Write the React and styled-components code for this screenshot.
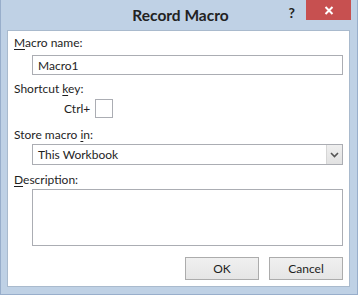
import React from "react";
import styled, { createGlobalStyle } from "styled-components";

const Global = createGlobalStyle`
  html, body { margin: 0; padding: 0; background: #bfd1e5; }
  body { font-family: Lato, "Noto Sans", sans-serif; font-size: 12px; color: #1e1e1e; }
  * { box-sizing: border-box; }
`;

const Window = styled.div`
  width: 358px;
  height: 295px;
  background: #bfd1e5;
  border: 1px solid #98aecb;
  border-top: none;
  display: flex;
  flex-direction: column;
  padding: 0 7px 7px 6px;
`;

const TitleBar = styled.div`
  height: 30px;
  position: relative;
  display: flex;
  align-items: flex-start;
  justify-content: center;
`;

const Title = styled.div`
  font-weight: 700;
  font-size: 15.5px;
  line-height: 20px;
  padding-top: 5px;
  color: #222;
  margin-left: 4px;
`;

const Help = styled.div`
  position: absolute;
  right: 55px;
  top: 4px;
  font-weight: 700;
  font-size: 14px;
  color: #222;
`;

const Close = styled.div`
  position: absolute;
  right: -1px;
  top: 0;
  width: 45px;
  height: 20px;
  background: #c75050;
  display: flex;
  align-items: center;
  justify-content: center;
`;

const Panel = styled.div`
  flex: 1;
  background: #fff;
  border: 1px solid #a9bacd;
  padding: 4px 6px 0 6px;
  display: flex;
  flex-direction: column;
`;

const Label = styled.div`
  line-height: 15px;
  margin-top: ${(p) => p.$mt || 0}px;
  u { text-decoration: underline; text-underline-offset: 2px; }
`;

const Field = styled.div`
  margin-left: 18px;
  margin-top: ${(p) => p.$mt || 0}px;
  height: ${(p) => p.$h}px;
  border: 1px solid #abadb3;
  background: #fff;
  display: flex;
  align-items: center;
  padding-left: 5px;
`;

const KeyRow = styled.div`
  display: flex;
  align-items: center;
  margin-top: 3px;
  margin-left: 50px;
  gap: 5px;
`;

const KeyBox = styled.div`
  width: 18px;
  height: 19px;
  border: 1px solid #abadb3;
`;

const Select = styled(Field)`
  padding-right: 0;
  justify-content: space-between;
  align-items: stretch;
`;

const SelectText = styled.span`
  display: flex;
  align-items: center;
`;

const Arrow = styled.div`
  width: 16px;
  background: linear-gradient(#efefef, #e2e2e2);
  border-left: 1px solid #d6d6d6;
  display: flex;
  align-items: center;
  justify-content: center;
`;

const Buttons = styled.div`
  display: flex;
  justify-content: flex-end;
  gap: 10px;
  margin-top: 11px;
`;

const Button = styled.div`
  width: 74px;
  height: 23px;
  border: 1px solid #acacac;
  background: linear-gradient(#f0f0f0, #e5e5e5);
  display: flex;
  align-items: center;
  justify-content: center;
`;

export default function App() {
  return (
    <>
      <Global />
      <Window>
        <TitleBar>
          <Title>Record Macro</Title>
          <Help>?</Help>
          <Close>
            <svg width="10" height="9" viewBox="0 0 10 9">
              <path d="M1.5 1 L8.5 8 M8.5 1 L1.5 8" stroke="#fff" strokeWidth="2" />
            </svg>
          </Close>
        </TitleBar>
        <Panel>
          <Label>
            <u>M</u>acro name:
          </Label>
          <Field $mt={5} $h={20}>Macro1</Field>
          <Label $mt={6}>
            Shortcut <u>k</u>ey:
          </Label>
          <KeyRow>
            <span>Ctrl+</span>
            <KeyBox />
          </KeyRow>
          <Label $mt={9}>
            Store macro <u>i</u>n:
          </Label>
          <Select $mt={2} $h={21}>
            <SelectText>This Workbook</SelectText>
            <Arrow>
              <svg width="9" height="6" viewBox="0 0 9 6">
                <path d="M1 1 L4.5 4.5 L8 1" stroke="#555" strokeWidth="1.6" fill="none" />
              </svg>
            </Arrow>
          </Select>
          <Label $mt={7}>
            <u>D</u>escription:
          </Label>
          <Field $mt={2} $h={57} />
          <Buttons>
            <Button>OK</Button>
            <Button>Cancel</Button>
          </Buttons>
        </Panel>
      </Window>
    </>
  );
}
